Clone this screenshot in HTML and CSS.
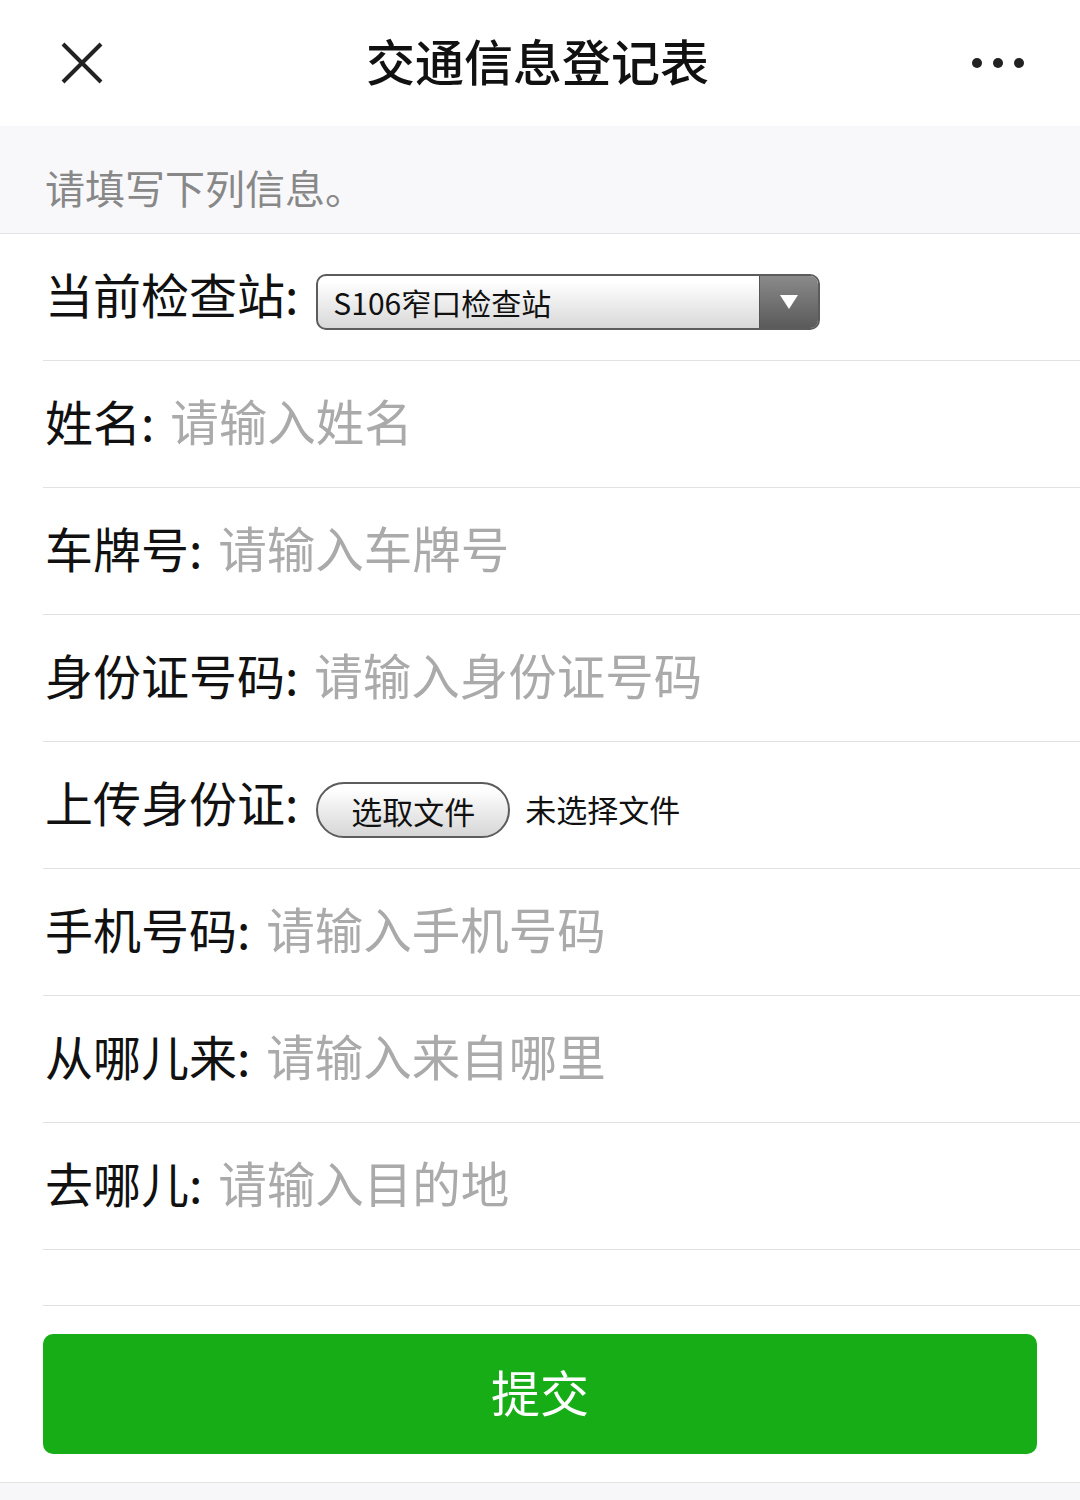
FILE: index.html
```html
<!DOCTYPE html>
<html lang="zh-CN">

<head>
    <meta charset="UTF-8">
    <link rel="stylesheet" href="styles.css">
    <title>交通信息登记表</title>
</head>

<body>
    <header class="topbar">
        <span class="close">
            <svg width="44" height="44" viewBox="0 0 44 44">
                <path d="M3 3 L41 41 M41 3 L3 41" stroke="#222" stroke-width="4" fill="none" />
            </svg>
        </span>
        <h1 class="title">交通信息登记表</h1>
        <span class="more">
            <svg width="54" height="12" viewBox="0 0 54 12">
                <circle cx="6" cy="6" r="5" fill="#222" />
                <circle cx="27" cy="6" r="5" fill="#222" />
                <circle cx="48" cy="6" r="5" fill="#222" />
            </svg>
        </span>
    </header>

    <div class="hint">请填写下列信息。</div>

    <form class="form">
        <div class="row">
            <label class="label">当前检查站:</label>
            <div class="select">
                <select name="station">
                    <option>S106窄口检查站</option>
                </select>
                <span class="arrow">
                    <svg width="20" height="16" viewBox="0 0 20 16">
                        <path d="M1 1 L19 1 L10 15 Z" fill="#fff" />
                    </svg>
                </span>
            </div>
        </div>
        <div class="row">
            <label class="label">姓名:</label>
            <input class="field" type="text" name="name" placeholder="请输入姓名">
        </div>
        <div class="row">
            <label class="label">车牌号:</label>
            <input class="field" type="text" name="plate" placeholder="请输入车牌号">
        </div>
        <div class="row">
            <label class="label">身份证号码:</label>
            <input class="field" type="text" name="idno" placeholder="请输入身份证号码">
        </div>
        <div class="row">
            <label class="label">上传身份证:</label>
            <span class="file-btn">选取文件</span>
            <span class="file-name">未选择文件</span>
        </div>
        <div class="row">
            <label class="label">手机号码:</label>
            <input class="field" type="text" name="phone" placeholder="请输入手机号码">
        </div>
        <div class="row">
            <label class="label">从哪儿来:</label>
            <input class="field" type="text" name="from" placeholder="请输入来自哪里">
        </div>
        <div class="row">
            <label class="label">去哪儿:</label>
            <input class="field" type="text" name="to" placeholder="请输入目的地">
        </div>
        <div class="row row-empty"></div>

        <div class="actions">
            <button type="button" class="submit">提交</button>
        </div>
    </form>

    <footer class="bottom"></footer>
</body>

</html>
```

FILE: styles.css
```css
body {
    margin: 0;
    background-color: #fff;
    font-family: "Noto Sans CJK SC", sans-serif;
    color: #111;
}

button,
input,
select {
    font-family: "Noto Sans CJK SC", sans-serif;
    margin: 0;
}

.topbar {
    height: 126px;
    display: flex;
    align-items: center;
    justify-content: space-between;
    padding: 0 55px 0 60px;
}

.close {
    display: flex;
    width: 44px;
    height: 44px;
}

.title {
    margin: 0 0 8px 0;
    font-size: 49px;
    font-weight: 500;
    line-height: 1;
    color: #111;
}

.more {
    display: flex;
}

.hint {
    height: 66px;
    padding: 41px 45px 0;
    background-color: #f8f8fb;
    border-bottom: 1px solid #e3e3e6;
    font-size: 40px;
    line-height: 40px;
    color: #888;
}

.form {
    padding-left: 43px;
}

.row {
    height: 126px;
    display: flex;
    align-items: center;
    padding-left: 2px;
    border-bottom: 1px solid #e2e2e2;
}

.row-empty {
    height: 55px;
}

.label {
    margin-bottom: 8px;
    font-size: 48px;
    line-height: 1;
    color: #111;
    white-space: nowrap;
}

.field {
    flex: 1;
    margin: 0 0 8px 16px;
    border: none;
    outline: none;
    padding: 0;
    font-size: 48.5px;
    color: #111;
    background: transparent;
}

.field::placeholder {
    color: #aaa;
}

.select {
    display: flex;
    width: 500px;
    height: 52px;
    margin: 10px 0 0 18px;
    border: 2px solid #5c5c5c;
    border-radius: 10px;
    overflow: hidden;
    background: linear-gradient(180deg, #fff 10%, #d8d8d8 100%);
}

.select select {
    flex: 1;
    appearance: none;
    -webkit-appearance: none;
    border: none;
    outline: none;
    background: transparent;
    padding: 0 0 0 15px;
    font-size: 30px;
    color: #111;
}

.arrow {
    width: 58px;
    display: flex;
    align-items: center;
    justify-content: center;
    border-left: 1px solid #555;
    background: linear-gradient(180deg, #8a8a8a 0%, #5a5a5a 100%);
}

.file-btn {
    width: 190px;
    height: 52px;
    margin: 10px 0 0 18px;
    display: flex;
    align-items: center;
    justify-content: center;
    border: 2px solid #5c5c5c;
    border-radius: 28px;
    background: linear-gradient(180deg, #fff 10%, #d6d6d6 100%);
    font-size: 31px;
    color: #111;
}

.file-name {
    margin: 6px 0 0 15px;
    font-size: 31px;
    color: #111;
}

.actions {
    padding: 28px 43px 28px 0;
}

.submit {
    width: 100%;
    height: 120px;
    padding-bottom: 8px;
    border: none;
    border-radius: 10px;
    background-color: #16ad16;
    color: #fff;
    font-size: 49px;
}

.bottom {
    height: 18px;
    background-color: #f7f7fa;
    border-top: 1px solid #e3e3e6;
}
```
